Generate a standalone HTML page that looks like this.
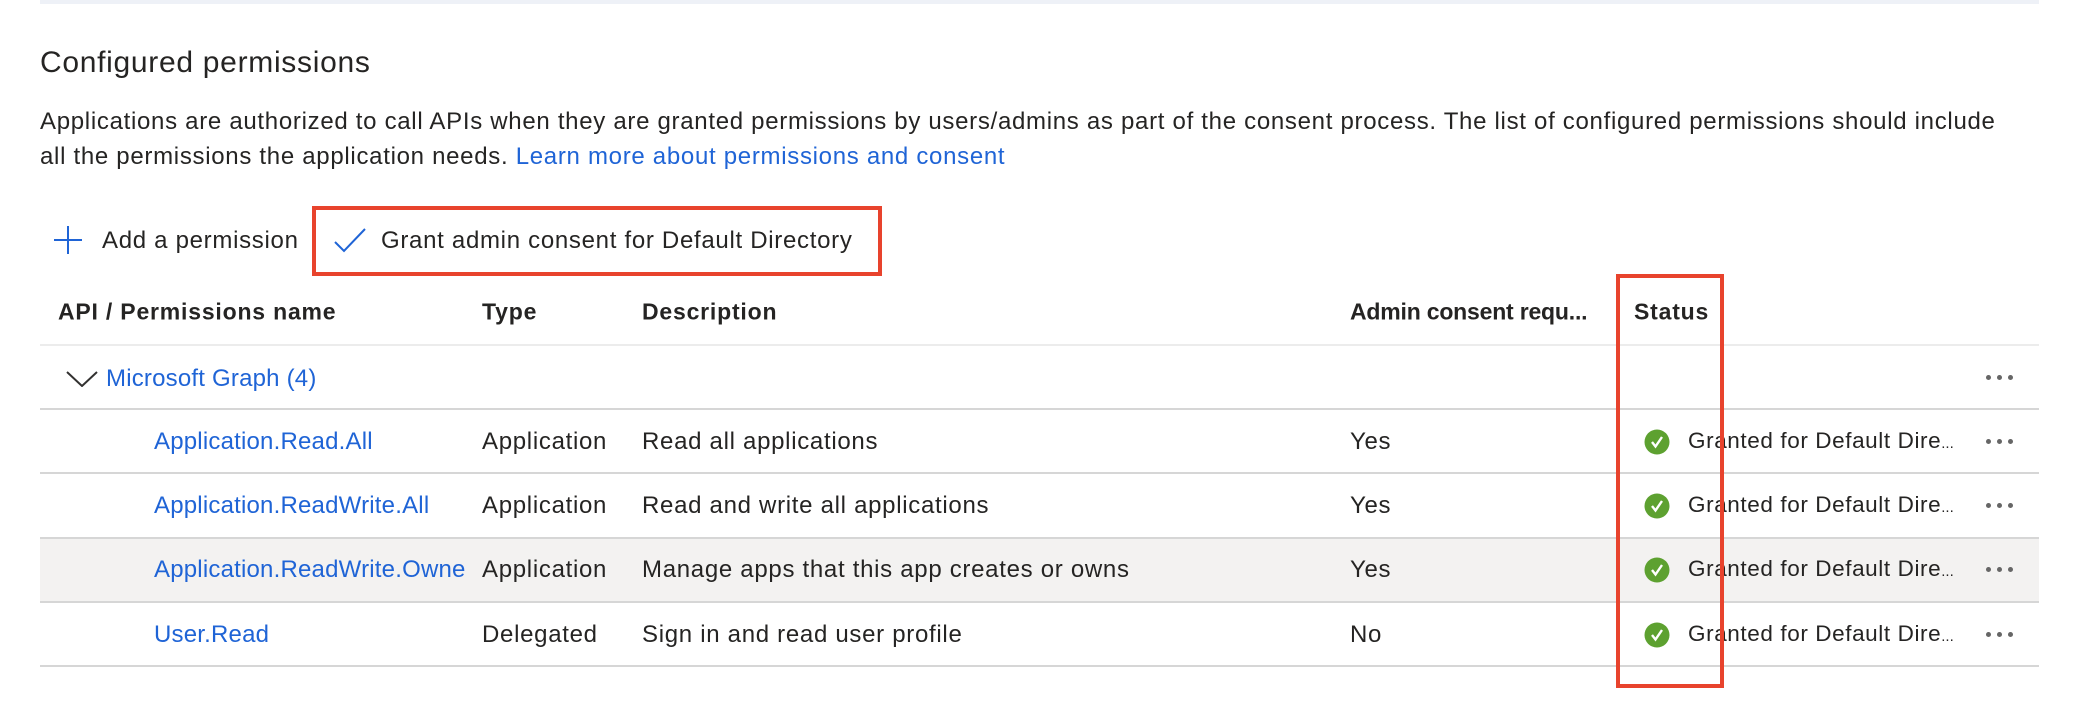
<!DOCTYPE html>
<html><head><meta charset="utf-8"><style>
*{margin:0;padding:0;box-sizing:border-box}
body{width:2083px;height:711px;background:#fff;position:relative;overflow:hidden;font-family:"Liberation Sans",sans-serif;color:#252423;font-size:24px;letter-spacing:0.7px}
.a{position:absolute;white-space:nowrap}
.c{transform:translateY(-50%)}
.l{color:#1f64d6}
.n{letter-spacing:0.2px}
.ln{position:absolute;left:40px;width:1999px;height:2px;background:#d6d6d6}
.b{font-weight:bold;font-size:23px;letter-spacing:0.8px}
.dots{position:absolute;width:34px;height:6px}
.dots i{position:absolute;top:0;width:5px;height:5px;border-radius:50%;background:#666}
.g{font-size:22.5px;letter-spacing:0.6px}
.g span{font-size:15px;letter-spacing:0}
</style></head><body>
<div class="a" style="left:40px;top:0;width:1999px;height:4px;background:#eef1f7"></div>
<div class="a c" style="left:40px;top:63px;font-size:30px">Configured permissions</div>
<div class="a c" style="left:40px;top:122px">Applications are authorized to call APIs when they are granted permissions by users/admins as part of the consent process. The list of configured permissions should include</div>
<div class="a c" style="left:40px;top:157px">all the permissions the application needs. <span class="l">Learn more about permissions and consent</span></div>

<svg class="a" style="left:53px;top:225px" width="30" height="30"><path d="M15 1V29M1 15H29" stroke="#1f64d6" stroke-width="2"/></svg>
<div class="a c" style="left:102px;top:241px">Add a permission</div>
<div class="a" style="left:312px;top:206px;width:570px;height:70px;border:4px solid #e8432d"></div>
<svg class="a" style="left:334px;top:227px" width="32" height="26"><path d="M1 15L10 24L31 2" fill="none" stroke="#1f64d6" stroke-width="2"/></svg>
<div class="a c" style="left:381px;top:241px">Grant admin consent for Default Directory</div>

<div class="a c b" style="left:58px;top:312px">API / Permissions name</div>
<div class="a c b" style="left:482px;top:312px">Type</div>
<div class="a c b" style="left:642px;top:312px">Description</div>
<div class="a c b" style="left:1350px;top:312px;letter-spacing:-0.2px">Admin consent requ...</div>
<div class="a c b" style="left:1634px;top:312px">Status</div>
<div class="ln" style="top:344px;background:#ececec"></div>

<div class="a" style="left:40px;top:538px;width:1999px;height:64px;background:#f3f2f1"></div>
<div class="ln" style="top:408px"></div>
<div class="ln" style="top:472px"></div>
<div class="ln" style="top:537px"></div>
<div class="ln" style="top:601px"></div>
<div class="ln" style="top:665px"></div>

<svg class="a" style="left:66px;top:371px" width="32" height="16"><path d="M1 1L16 15L31 1" fill="none" stroke="#323130" stroke-width="2"/></svg>
<div class="a c l n" style="left:106px;top:379px">Microsoft Graph (4)</div>

<div class="a c l n" style="left:154px;top:442px">Application.Read.All</div>
<div class="a c l n" style="left:154px;top:506px">Application.ReadWrite.All</div>
<div class="a c l n" style="left:154px;top:570px;width:311px;overflow:hidden">Application.ReadWrite.OwnedBy</div>
<div class="a c l n" style="left:154px;top:635px">User.Read</div>

<div class="a c" style="left:482px;top:442px">Application</div>
<div class="a c" style="left:482px;top:506px">Application</div>
<div class="a c" style="left:482px;top:570px">Application</div>
<div class="a c" style="left:482px;top:635px">Delegated</div>

<div class="a c" style="left:642px;top:442px">Read all applications</div>
<div class="a c" style="left:642px;top:506px">Read and write all applications</div>
<div class="a c" style="left:642px;top:570px">Manage apps that this app creates or owns</div>
<div class="a c" style="left:642px;top:635px">Sign in and read user profile</div>

<div class="a c" style="left:1350px;top:442px">Yes</div>
<div class="a c" style="left:1350px;top:506px">Yes</div>
<div class="a c" style="left:1350px;top:570px">Yes</div>
<div class="a c" style="left:1350px;top:635px">No</div>

<svg class="a" style="left:1644px;top:429px" width="26" height="26"><circle cx="13" cy="13" r="12.5" fill="#5da130"/><path d="M8 13L11.5 17.5L18 8" fill="none" stroke="#fff" stroke-width="2.4"/></svg>
<svg class="a" style="left:1644px;top:493px" width="26" height="26"><circle cx="13" cy="13" r="12.5" fill="#5da130"/><path d="M8 13L11.5 17.5L18 8" fill="none" stroke="#fff" stroke-width="2.4"/></svg>
<svg class="a" style="left:1644px;top:557px" width="26" height="26"><circle cx="13" cy="13" r="12.5" fill="#5da130"/><path d="M8 13L11.5 17.5L18 8" fill="none" stroke="#fff" stroke-width="2.4"/></svg>
<svg class="a" style="left:1644px;top:622px" width="26" height="26"><circle cx="13" cy="13" r="12.5" fill="#5da130"/><path d="M8 13L11.5 17.5L18 8" fill="none" stroke="#fff" stroke-width="2.4"/></svg>
<div class="a c g" style="left:1688px;top:441px">Granted for Default Dire<span>...</span></div>
<div class="a c g" style="left:1688px;top:505px">Granted for Default Dire<span>...</span></div>
<div class="a c g" style="left:1688px;top:569px">Granted for Default Dire<span>...</span></div>
<div class="a c g" style="left:1688px;top:634px">Granted for Default Dire<span>...</span></div>

<div class="dots" style="left:1986px;top:375px"><i style="left:0"></i><i style="left:11px"></i><i style="left:22px"></i></div>
<div class="dots" style="left:1986px;top:439px"><i style="left:0"></i><i style="left:11px"></i><i style="left:22px"></i></div>
<div class="dots" style="left:1986px;top:503px"><i style="left:0"></i><i style="left:11px"></i><i style="left:22px"></i></div>
<div class="dots" style="left:1986px;top:567px"><i style="left:0"></i><i style="left:11px"></i><i style="left:22px"></i></div>
<div class="dots" style="left:1986px;top:632px"><i style="left:0"></i><i style="left:11px"></i><i style="left:22px"></i></div>

<div class="a" style="left:1616px;top:274px;width:108px;height:414px;border:4px solid #e8432d"></div>
</body></html>
